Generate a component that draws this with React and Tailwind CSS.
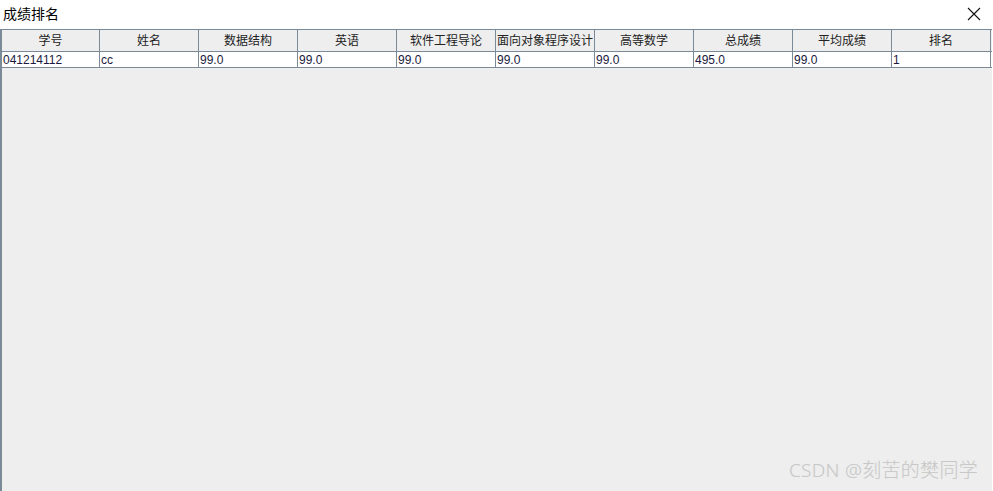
import React from "react";

const headers = ["学号", "姓名", "数据结构", "英语", "软件工程导论", "面向对象程序设计", "高等数学", "总成绩", "平均成绩", "排名"];
const row = ["041214112", "cc", "99.0", "99.0", "99.0", "99.0", "99.0", "495.0", "99.0", "1"];

export default function App() {
  const font = { fontFamily: '"Liberation Sans", "Noto Sans CJK SC", sans-serif' };
  return (
    <div className="w-[993px] h-[491px] bg-white flex flex-col overflow-hidden" style={font}>
      <div className="h-[29px] flex items-center justify-between pl-[3px] pr-[12px] shrink-0">
        <span className="text-[14px] text-black leading-none mt-[-2px]">成绩排名</span>
        <svg width="14" height="14" viewBox="0 0 14 14" className="mt-[-2px]">
          <path d="M1 1 L13 13 M13 1 L1 13" stroke="#111" strokeWidth="1.1" fill="none" />
        </svg>
      </div>
      <div className="flex-1 flex flex-col bg-[#eeeeee] border-l-2 border-[#7a8a99] w-[992px]">
        <div className="flex h-[23px] border-y border-[#7a8a99] bg-[#eeeeee] -ml-[2px]">
          {headers.map((h, i) => (
            <div
              key={i}
              className={`w-[99px] shrink-0 flex items-center justify-center text-[12px] text-[#222] ${i === 0 ? "border-l-2" : "border-l"} border-[#7a8a99] whitespace-nowrap overflow-hidden`}
            >
              {h}
            </div>
          ))}
          <div className="border-l border-[#7a8a99]" />
        </div>
        <div className="flex h-[16px] border-b border-[#7a8a99] bg-white -ml-[2px]">
          {row.map((c, i) => (
            <div
              key={i}
              className={`w-[99px] shrink-0 flex items-center pl-[1px] text-[12px] text-[#1a1a40] ${i === 0 ? "border-l-2" : "border-l"} border-[#7a8a99] leading-none`}
            >
              {c}
            </div>
          ))}
          <div className="border-l border-[#7a8a99]" />
        </div>
        <div className="flex-1 flex items-end justify-end pr-[14px] pb-[7px]">
          <span
            className="text-[19px] text-[#c8c8c8] tracking-[0.3px] font-light"
            style={{ fontFamily: '"Noto Sans", "Noto Sans CJK SC", sans-serif', textShadow: "0 0 1px #e4e4e4" }}
          >
            CSDN @刻苦的樊同学
          </span>
        </div>
      </div>
    </div>
  );
}
